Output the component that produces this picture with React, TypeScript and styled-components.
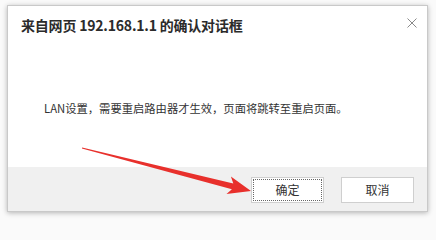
import React from 'react';
import styled, { createGlobalStyle } from 'styled-components';

const GlobalStyle = createGlobalStyle`
  html, body {
    margin: 0;
    padding: 0;
    height: 222px;
    overflow: hidden;
    background: #fafafa;
    font-family: "Noto Sans CJK SC", "Noto Sans", sans-serif;
  }
`;

const Page = styled.div`
  position: relative;
  width: 436px;
  height: 222px;
  padding: 5px 0 0 7px;
  box-sizing: border-box;
`;

const Dialog = styled.div`
  width: 421px;
  height: 207px;
  box-sizing: border-box;
  display: flex;
  flex-direction: column;
  background: #fff;
  border: 1px solid #c9c9c9;
  box-shadow: 0 1px 5px rgba(0, 0, 0, 0.28);
`;

const Header = styled.div`
  display: flex;
  justify-content: space-between;
  align-items: flex-start;
  padding: 11px 9px 0 13px;
  height: 30px;
  box-sizing: border-box;
`;

const Title = styled.h1`
  margin: 0;
  font-size: 14px;
  line-height: 16px;
  font-weight: 700;
  letter-spacing: -0.2px;
  color: #2b2b2b;
`;

const CloseButton = styled.button`
  border: none;
  background: none;
  padding: 0;
  width: 12px;
  height: 12px;
  cursor: pointer;
  display: flex;
`;

const Body = styled.div`
  flex: 1;
  padding: 64px 0 0 36px;
  box-sizing: border-box;
`;

const Message = styled.p`
  margin: 0;
  font-size: 11.3px;
  line-height: 16px;
  color: #333;
  white-space: nowrap;
`;

const Footer = styled.div`
  height: 44px;
  background: #f0f0f0;
  display: flex;
  justify-content: flex-end;
  align-items: center;
  gap: 17px;
  padding: 0 13px 0 0;
  box-sizing: border-box;
`;

const DialogButton = styled.button<{ $focused?: boolean }>`
  width: 73px;
  height: 26px;
  margin-top: 1px;
  background: #fff;
  border: 1px solid #cfcfcf;
  font-family: inherit;
  font-size: 12px;
  color: #333;
  padding: 0;
  cursor: pointer;
  outline: ${p => (p.$focused ? '1px dotted #666' : 'none')};
  outline-offset: -3px;
`;

const Overlay = styled.svg`
  position: absolute;
  left: 0;
  top: 0;
  width: 436px;
  height: 222px;
  pointer-events: none;
`;

const App: React.FC = () => (
  <>
    <GlobalStyle />
    <Page>
      <Dialog>
        <Header>
          <Title>来自网页 192.168.1.1 的确认对话框</Title>
          <CloseButton aria-label="关闭">
            <svg width="12" height="12" viewBox="0 0 12 12">
              <path d="M1.5 1.5 L10.5 10.5 M10.5 1.5 L1.5 10.5" stroke="#8a8a8a" strokeWidth="1" />
            </svg>
          </CloseButton>
        </Header>
        <Body>
          <Message>LAN设置，需要重启路由器才生效，页面将跳转至重启页面。</Message>
        </Body>
        <Footer>
          <DialogButton $focused>确定</DialogButton>
          <DialogButton>取消</DialogButton>
        </Footer>
      </Dialog>
      <Overlay viewBox="0 0 436 222">
        <polygon
          points="82.1,147.4 233.3,183.4 230.9,176.6 251,191 226.5,194 231.9,189.2 81.9,148.6"
          fill="#e8302c"
        />
      </Overlay>
    </Page>
  </>
);

export default App;
